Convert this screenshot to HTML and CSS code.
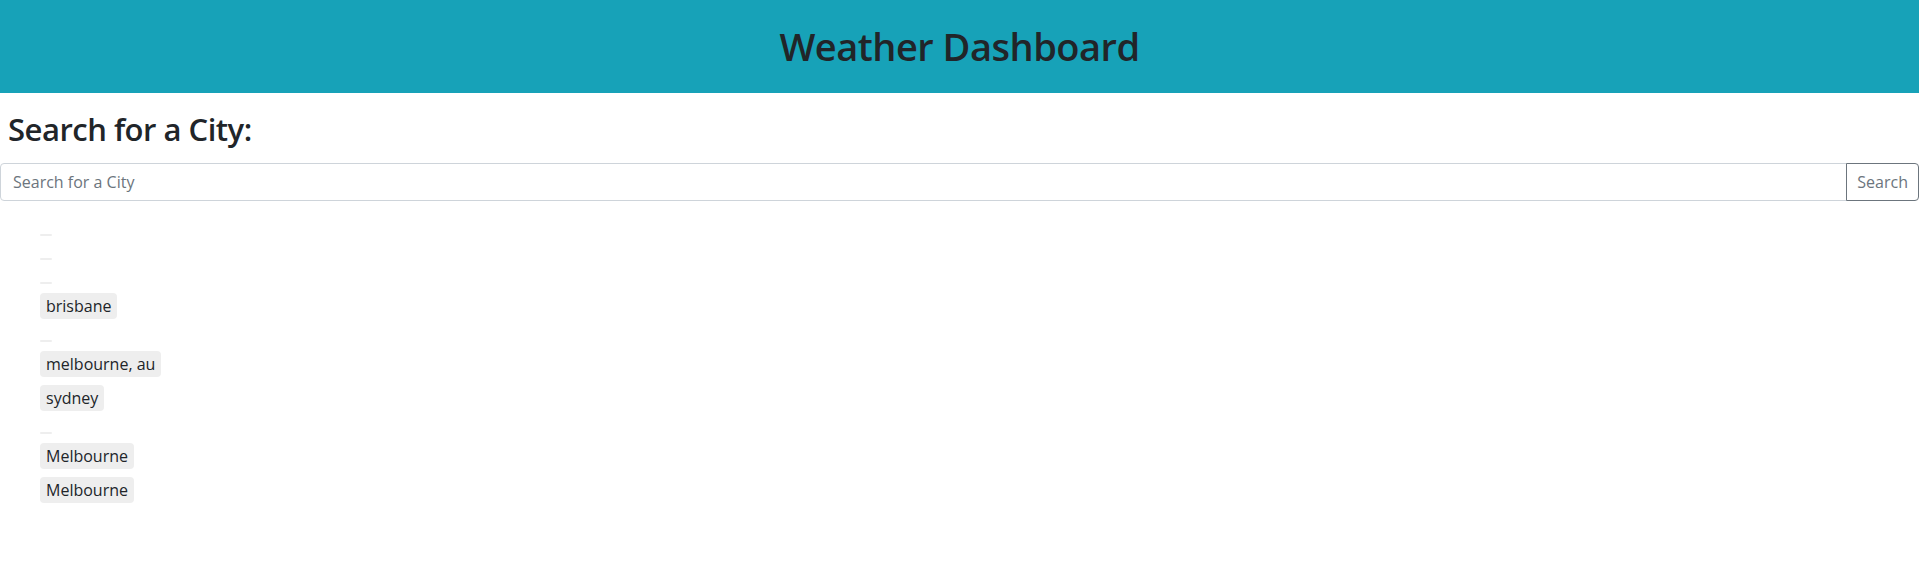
FILE: index.html
```html
<!DOCTYPE html>
<html lang="en">
<head>
<meta charset="utf-8">
<title>Weather Dashboard</title>
<link rel="stylesheet" href="styles.css">
</head>
<body>
<header class="banner">
  <h1 class="banner-title">Weather Dashboard</h1>
</header>
<main class="search">
  <h2 class="search-heading">Search for a City:</h2>
  <div class="input-group">
    <input class="city-input" type="text" placeholder="Search for a City">
    <button class="search-btn" type="button">Search</button>
  </div>
  <ul class="history">
    <li class="history-item is-empty"><span class="chip"></span></li>
    <li class="history-item is-empty"><span class="chip"></span></li>
    <li class="history-item is-empty"><span class="chip"></span></li>
    <li class="history-item"><span class="chip">brisbane</span></li>
    <li class="history-item is-empty"><span class="chip"></span></li>
    <li class="history-item"><span class="chip">melbourne, au</span></li>
    <li class="history-item"><span class="chip">sydney</span></li>
    <li class="history-item is-empty"><span class="chip"></span></li>
    <li class="history-item"><span class="chip">Melbourne</span></li>
    <li class="history-item"><span class="chip">Melbourne</span></li>
  </ul>
</main>
</body>
</html>
```

FILE: styles.css
```css
* { box-sizing: border-box; }

body {
  margin: 0;
  font-family: "Open Sans", "Noto Sans", sans-serif;
  color: #212529;
  background: #fff;
  font-size: 16px;
  line-height: 1.5;
}

.banner {
  height: 93px;
  background: #17a2b8;
  display: flex;
  align-items: center;
  justify-content: center;
}

.banner-title {
  margin: 0;
  font-size: 38px;
  font-weight: 600;
  letter-spacing: -0.5px;
  line-height: 1.2;
  color: #212529;
}

.search-heading {
  margin: 18px 8px 15px;
  font-size: 31px;
  font-weight: 600;
  letter-spacing: -0.5px;
  line-height: 1.2;
}

.input-group {
  display: flex;
  height: 38px;
}

.city-input {
  flex: 1;
  min-width: 0;
  height: 38px;
  padding: 6px 12px;
  font: inherit;
  color: #495057;
  border: 1px solid #ced4da;
  border-radius: 4px 0 0 4px;
  outline: none;
}

.city-input::placeholder { color: #6c757d; }

.search-btn {
  height: 38px;
  padding: 6px 10px;
  font: inherit;
  color: #6c757d;
  background: #fff;
  border: 1px solid #6c757d;
  border-radius: 0 4px 4px 0;
  margin-left: -1px;
}

.history {
  list-style: none;
  margin: 16px 0;
  padding-left: 40px;
}

.history-item {
  height: 34px;
  padding-top: 4px;
  display: flex;
  align-items: flex-start;
}

.history-item.is-empty {
  height: 24px;
  padding-top: 17px;
}

.chip {
  background: #eeeeee;
  border-radius: 4px;
  padding: 1px 6px;
  line-height: 24px;
  color: #212529;
}
```
